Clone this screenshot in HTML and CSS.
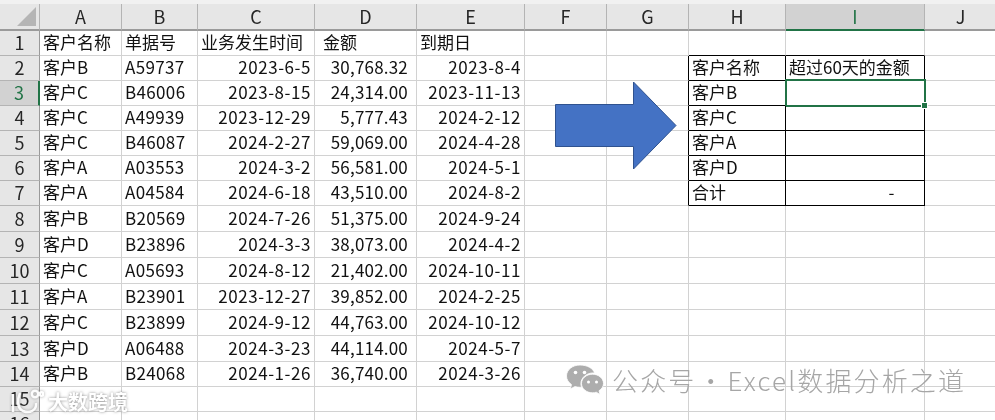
FILE: index.html
```html
<!DOCTYPE html>
<html lang="zh-CN">
<head>
<meta charset="utf-8">
<title>超过60天的金额</title>
<link rel="stylesheet" href="styles.css">
</head>
<body>
<main class="sheet">
<div class="c ch corner"><svg class="corner-mark" viewBox="0 0 19 19" aria-hidden="true"><polygon points="19,0 19,19 0,19"/></svg></div>
<div class="c ch">A</div><div class="c ch">B</div><div class="c ch">C</div><div class="c ch">D</div><div class="c ch">E</div><div class="c ch">F</div><div class="c ch">G</div><div class="c ch">H</div><div class="c ch sel-col">I</div><div class="c ch last">J</div>

<div class="c rh">1</div><div class="c">客户名称</div><div class="c">单据号</div><div class="c">业务发生时间</div><div class="c indent">金额</div><div class="c">到期日</div><div class="c"></div><div class="c"></div><div class="c bb"></div><div class="c bb"></div><div class="c"></div>

<div class="c rh">2</div><div class="c">客户B</div><div class="c code">A59737</div><div class="c n">2023-6-5</div><div class="c n acc">30,768.32</div><div class="c n">2023-8-4</div><div class="c"></div><div class="c br"></div><div class="c box">客户名称</div><div class="c box">超过60天的金额</div><div class="c"></div>

<div class="c rh sel-row">3</div><div class="c">客户C</div><div class="c code">B46006</div><div class="c n">2023-8-15</div><div class="c n acc">24,314.00</div><div class="c n">2023-11-13</div><div class="c"></div><div class="c br"></div><div class="c box">客户B</div><div class="c box active"><span class="handle"></span></div><div class="c"></div>

<div class="c rh">4</div><div class="c">客户C</div><div class="c code">A49939</div><div class="c n">2023-12-29</div><div class="c n acc">5,777.43</div><div class="c n">2024-2-12</div><div class="c"></div><div class="c br"></div><div class="c box">客户C</div><div class="c box"></div><div class="c"></div>

<div class="c rh">5</div><div class="c">客户C</div><div class="c code">B46087</div><div class="c n">2024-2-27</div><div class="c n acc">59,069.00</div><div class="c n">2024-4-28</div><div class="c"></div><div class="c br"></div><div class="c box">客户A</div><div class="c box"></div><div class="c"></div>

<div class="c rh">6</div><div class="c">客户A</div><div class="c code">A03553</div><div class="c n">2024-3-2</div><div class="c n acc">56,581.00</div><div class="c n">2024-5-1</div><div class="c"></div><div class="c br"></div><div class="c box">客户D</div><div class="c box"></div><div class="c"></div>

<div class="c rh">7</div><div class="c">客户A</div><div class="c code">A04584</div><div class="c n">2024-6-18</div><div class="c n acc">43,510.00</div><div class="c n">2024-8-2</div><div class="c"></div><div class="c br"></div><div class="c box">合计</div><div class="c box n dash">-</div><div class="c"></div>

<div class="c rh">8</div><div class="c">客户B</div><div class="c code">B20569</div><div class="c n">2024-7-26</div><div class="c n acc">51,375.00</div><div class="c n">2024-9-24</div><div class="c"></div><div class="c"></div><div class="c"></div><div class="c"></div><div class="c"></div>

<div class="c rh">9</div><div class="c">客户D</div><div class="c code">B23896</div><div class="c n">2024-3-3</div><div class="c n acc">38,073.00</div><div class="c n">2024-4-2</div><div class="c"></div><div class="c"></div><div class="c"></div><div class="c"></div><div class="c"></div>

<div class="c rh">10</div><div class="c">客户C</div><div class="c code">A05693</div><div class="c n">2024-8-12</div><div class="c n acc">21,402.00</div><div class="c n">2024-10-11</div><div class="c"></div><div class="c"></div><div class="c"></div><div class="c"></div><div class="c"></div>

<div class="c rh">11</div><div class="c">客户A</div><div class="c code">B23901</div><div class="c n">2023-12-27</div><div class="c n acc">39,852.00</div><div class="c n">2024-2-25</div><div class="c"></div><div class="c"></div><div class="c"></div><div class="c"></div><div class="c"></div>

<div class="c rh">12</div><div class="c">客户C</div><div class="c code">B23899</div><div class="c n">2024-9-12</div><div class="c n acc">44,763.00</div><div class="c n">2024-10-12</div><div class="c"></div><div class="c"></div><div class="c"></div><div class="c"></div><div class="c"></div>

<div class="c rh">13</div><div class="c">客户D</div><div class="c code">A06488</div><div class="c n">2024-3-23</div><div class="c n acc">44,114.00</div><div class="c n">2024-5-7</div><div class="c"></div><div class="c"></div><div class="c"></div><div class="c"></div><div class="c"></div>

<div class="c rh">14</div><div class="c">客户B</div><div class="c code">B24068</div><div class="c n">2024-1-26</div><div class="c n acc">36,740.00</div><div class="c n">2024-3-26</div><div class="c"></div><div class="c"></div><div class="c"></div><div class="c"></div><div class="c"></div>

<div class="c rh">15</div><div class="c"></div><div class="c"></div><div class="c"></div><div class="c"></div><div class="c"></div><div class="c"></div><div class="c"></div><div class="c"></div><div class="c"></div><div class="c"></div>

<div class="c rh">16</div><div class="c"></div><div class="c"></div><div class="c"></div><div class="c"></div><div class="c"></div><div class="c"></div><div class="c"></div><div class="c"></div><div class="c"></div><div class="c"></div>

<svg class="arrow" viewBox="0 0 122 90" aria-hidden="true"><polygon points="0.5,23.5 78.5,23.5 78.5,1 121,44.5 78.5,88 78.5,65.5 0.5,65.5"/></svg>

<div class="wm-wechat">
<svg class="wechat" viewBox="0 0 38 32" aria-hidden="true">
<path class="wc-a" d="M14 1C6.500 1 .5 5.800.5 12c0 3.500 1.900 6.500 5 8.600L4.300 25l4.700-2.500c1.600.5 3.300.8 5 .8.500 0 1 0 1.500-.1-.4-1.200-.6-2.300-.6-3.500 0-6 5.600-10.800 12.500-10.800.4 0 .8 0 1.200.1C27 4.200 21 1 14 1z"/>
<path class="wc-a" d="M37.500 19.500c0-5.200-5-9.300-11-9.300s-11 4.100-11 9.300 5 9.300 11 9.300c1.300 0 2.600-.2 3.800-.6l3.700 2.300-1-3.700c2.700-1.800 4.500-4.400 4.500-7.300z"/>
<circle class="wc-e" cx="9.500" cy="8.500" r="1.800"/><circle class="wc-e" cx="18.500" cy="8.500" r="1.800"/>
<circle class="wc-e" cx="22.500" cy="18" r="1.500"/><circle class="wc-e" cx="30.500" cy="18" r="1.500"/>
</svg>
<span class="wm-text">公众号 · Excel数据分析之道</span>
</div>

<div class="wm-brand">
<svg class="brand-logo" viewBox="0 0 36 28" aria-hidden="true"><path d="M5 6v18"/><path d="M12 5c-3 7-3 15 3 18 7 3 14-1 13-8"/><circle cx="27" cy="6" r="3.200"/><circle cx="33.500" cy="6" r="1.800"/></svg>
<span class="brand-text">大数跨境</span>
</div>
</main>
</body>
</html>
```
FILE: styles.css
```css
html, body {
  margin: 0;
  padding: 0;
  width: 995px;
  height: 420px;
  overflow: hidden;
  background: #fff;
}

.sheet {
  position: relative;
  display: grid;
  grid-template-columns: 40px 82px 76px 117px 102px 108px 82px 82px 97px 139px 71px;
  grid-template-rows: 31px repeat(7, 25px) repeat(6, 26px) 25px 25px 25px;
  width: 995px;
  height: 420px;
  overflow: hidden;
  background: linear-gradient(#f1f1f1 4px, #fff 4px);
  font-family: "Noto Sans CJK SC", "Noto Sans", sans-serif;
  font-size: 17px;
  font-weight: 400;
  color: #111;
  filter: blur(0.35px);
}

.c {
  box-sizing: border-box;
  position: relative;
  display: flex;
  align-items: center;
  border-right: 1px solid #d2d2d2;
  border-bottom: 1px solid #d2d2d2;
  padding: 0 3px 2px 3px;
  line-height: 22px;
  white-space: nowrap;
}

.n { justify-content: flex-end; letter-spacing: .55px; }
.acc { padding-right: 8px; letter-spacing: .2px; }
.dash { padding-right: 29px; }
.code { letter-spacing: .35px; }
.indent { padding-left: 8px; }

.ch {
  margin-top: 4px;
  background: #e6e6e6;
  border-right-color: #b4b4b4;
  border-bottom: 2px solid #9a9a9a;
  padding: 0 0 1px;
  justify-content: center;
  font-size: 18px;
  color: #262626;
}

.last { border-right: 0; }

.corner-mark {
  position: absolute;
  right: 3px;
  bottom: 3px;
  width: 19px;
  height: 19px;
  fill: #b5b5b5;
}

.rh {
  background: #e6e6e6;
  border-right: 1px solid #9a9a9a;
  border-bottom-color: #b4b4b4;
  padding: 0 0 2px;
  justify-content: center;
  font-size: 18px;
  color: #262626;
}

.sel-col {
  background: #d2d2d2;
  border-bottom-color: #217346;
  color: #217346;
}

.sel-row {
  background: #d2d2d2;
  border-right: 2px solid #217346;
  color: #217346;
}

.bb { border-bottom-color: #000; }
.br { border-right-color: #000; }

.box {
  border-right-color: #000;
  border-bottom-color: #000;
}

.active::after {
  content: "";
  position: absolute;
  left: -1px;
  top: -2px;
  right: -2px;
  bottom: -2px;
  border: 2px solid #217346;
}

.handle {
  position: absolute;
  right: -3px;
  bottom: -3px;
  z-index: 1;
  width: 5px;
  height: 5px;
  background: #217346;
  outline: 1px solid #fff;
}

.arrow {
  position: absolute;
  left: 555px;
  top: 81px;
  width: 122px;
  height: 90px;
  fill: #4472c4;
  stroke: #2f528f;
  stroke-width: 1;
}

.wm-wechat {
  position: absolute;
  left: 566px;
  top: 362px;
  display: flex;
  align-items: center;
  gap: 8px;
  height: 36px;
  color: #a6a6a6;
}

.wechat { width: 38px; height: 32px; }
.wc-a { fill: #adadad; stroke: #fff; stroke-width: .8; }
.wc-e { fill: #fff; }

.wm-text {
  font-size: 26px;
  font-weight: 300;
  letter-spacing: 2.15px;
  word-spacing: -6.5px;
  line-height: 36px;
  white-space: pre;
}

.wm-brand {
  position: absolute;
  left: 8px;
  top: 389px;
  display: flex;
  align-items: center;
  gap: 4px;
  height: 26px;
  color: #fff;
}

.brand-logo {
  width: 36px;
  height: 28px;
  fill: none;
  stroke: #fff;
  stroke-width: 2.5;
  opacity: .9;
  filter: drop-shadow(0 0 1.500px rgba(90, 90, 90, .6));
}

.brand-text {
  font-size: 20px;
  font-weight: 700;
  line-height: 26px;
  text-shadow: 0 0 3px rgba(90, 90, 90, .7);
}
```
